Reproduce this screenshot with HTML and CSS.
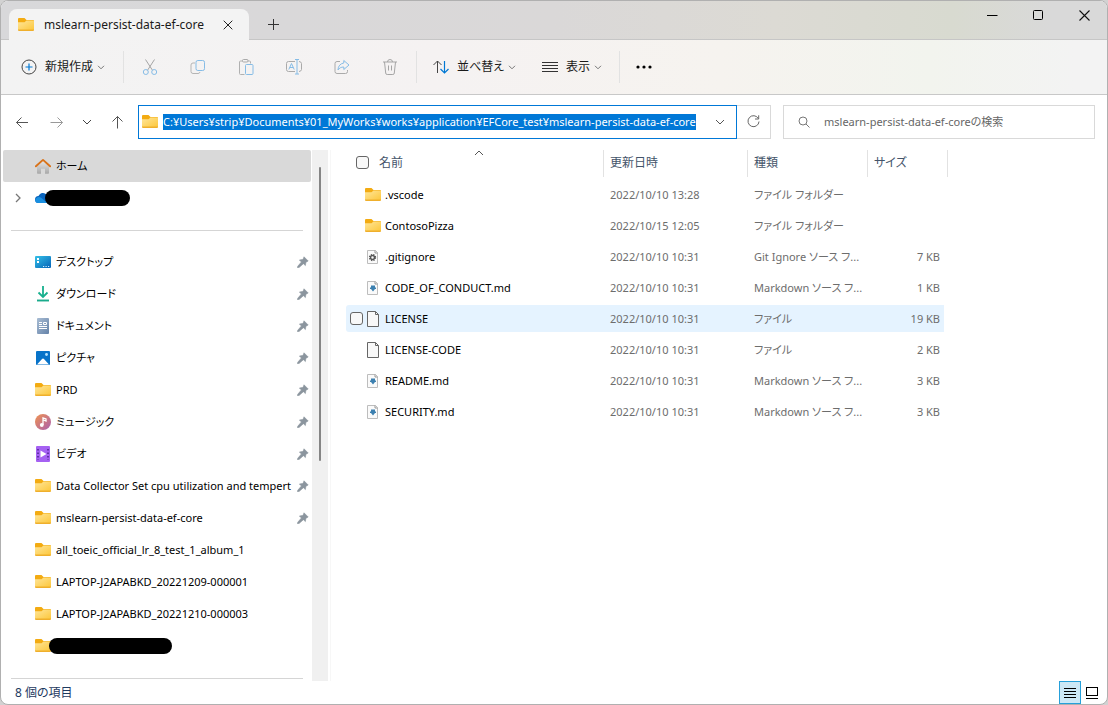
FILE: index.html
```html
<!DOCTYPE html>
<html lang="ja">
<head>
<meta charset="utf-8">
<title>mslearn-persist-data-ef-core</title>
<link rel="stylesheet" href="styles.css">
</head>
<body>
<svg class="defs" width="0" height="0" aria-hidden="true">
  <defs>
    <linearGradient id="gFolder" x1="0" y1="0" x2="1" y2="1"><stop offset="0" stop-color="#ffe69a"/><stop offset="1" stop-color="#fcc73c"/></linearGradient>
    <linearGradient id="gDesk" x1="0" y1="0" x2="1" y2="1"><stop offset="0" stop-color="#35c1e8"/><stop offset="1" stop-color="#0563b8"/></linearGradient>
    <linearGradient id="gDoc" x1="0" y1="0" x2="1" y2="1"><stop offset="0" stop-color="#a9bdd4"/><stop offset="1" stop-color="#6482a8"/></linearGradient>
    <linearGradient id="gMusic" x1="0" y1="0" x2="1" y2="1"><stop offset="0" stop-color="#f09350"/><stop offset="1" stop-color="#a95fb0"/></linearGradient>
    <linearGradient id="gHome" x1="0" y1="0" x2="0" y2="1"><stop offset="0" stop-color="#e8e8e8"/><stop offset="1" stop-color="#a8a8a8"/></linearGradient>
  </defs>
  <symbol id="folder" viewBox="0 0 16 16"><path d="M0 2a1 1 0 0 1 1-1h5.500l2 2H15a1 1 0 0 1 1 1v3H0z" fill="#f3ab12"/><path d="M0 5.200h6.500L8.500 3.500h6.900a.6.6 0 0 1 .6.6V13H0z" fill="url(#gFolder)"/><path d="M0 12.400h16v.600a1 1 0 0 1-1 1H1a1 1 0 0 1-1-1z" fill="#efaf2c"/></symbol>
  <symbol id="home" viewBox="0 0 16 16"><path d="M2 8l6-5.500L14 8v7a.8.8 0 0 1-.8.8H10v-5H6v5H2.800a.8.8 0 0 1-.8-.8z" fill="url(#gHome)"/><path d="M.9 8.300L8 1.900l7.100 6.400" fill="none" stroke="#d9731a" stroke-width="1.900" stroke-linecap="round" stroke-linejoin="round"/></symbol>
  <symbol id="cloud" viewBox="0 0 16 16"><path d="M3.500 13A3.500 3.500 0 0 1 3.500 6 5 5 0 0 1 12 5v8z" fill="#0a64bd"/><path d="M0 10.500C1 7 4 6 6.500 8l6 5h-9A3.500 3.500 0 0 1 0 10.500z" fill="#198fe0"/></symbol>
  <symbol id="desktop" viewBox="0 0 16 16"><rect y="2" width="16" height="12" rx="1" fill="url(#gDesk)"/><path d="M2 4h2v2H2zM2 7h2v2H2z" fill="#fff"/><path d="M8 12h1.200v1H8zM10.500 12h1.200v1h-1.200zM13 12h1.200v1H13z" fill="#d0ebff"/></symbol>
  <symbol id="download" viewBox="0 0 16 16"><path d="M8 0v10.500M3.500 6.500L8 11l4.500-4.500" fill="none" stroke="#17b08e" stroke-width="1.800"/><path d="M2 14.500h12" stroke="#1aab8c" stroke-width="1.900"/></symbol>
  <symbol id="document" viewBox="0 0 16 16"><rect x="2" width="12" height="16" rx="1" fill="url(#gDoc)"/><path d="M4 4.500h3M4 6.500h3M4 8.500h8M4 10.500h8" stroke="#fff"/><path d="M8.500 4.500h3v2h-3z" stroke="#fff" fill="none"/></symbol>
  <symbol id="picture" viewBox="0 0 16 16"><rect x="1" y="1" width="14" height="14" rx="1" fill="#0873c9"/><path d="M2 14.500l4.800-5.300a1.500 1.500 0 0 1 2.400 0L14 14.500z" fill="#fff"/><circle cx="11.500" cy="4.500" r="1.400" fill="#b5e3ff"/></symbol>
  <symbol id="music" viewBox="0 0 16 16"><circle cx="8" cy="8" r="8" fill="url(#gMusic)"/><circle cx="6.800" cy="11" r="1.900" fill="#fff"/><path d="M8 11V4l3 1v2L8.500 6" fill="none" stroke="#fff" stroke-width="1.300"/></symbol>
  <symbol id="video" viewBox="0 0 16 16"><rect x="1" y="0" width="14" height="16" rx="1" fill="#a561f2"/><path d="M5.500 4.500v7L11.500 8z" fill="#fff"/><path d="M3 3v11M13 3v11" stroke="#4a2090" stroke-width="1.500" stroke-dasharray="1.500 2"/></symbol>
  <symbol id="pin" viewBox="0 0 12 12"><path d="M7 .8L11.200 5l-1.400.7-1 1-.4 2.900-2-1.900L2 11.600.5 11.800l.2-1.500L4.400 6 2.400 4l3-.5 1-1z" fill="#8b959e" stroke="#8b959e" stroke-width=".6"/></symbol>
  <symbol id="chev" viewBox="0 0 10 10"><path d="M2 3.800L5 6.800l3-3" fill="none" stroke="currentColor"/></symbol>
  <symbol id="bigchev" viewBox="0 0 10 10"><path d="M1 3L5 7l4-4" fill="none" stroke="currentColor"/></symbol>
  <symbol id="gear" viewBox="0 0 16 16"><path d="M2.500 1.500h8L12.500 3.500v11h-10z" fill="#fafafa" stroke="#bdbdbd"/><path d="M10 1.500V4h2.500" fill="none" stroke="#999"/><circle cx="7.500" cy="8.500" r="2" fill="none" stroke="#555" stroke-width="1.500"/><circle cx="7.500" cy="8.500" r="3.100" fill="none" stroke="#555" stroke-width="1.100" stroke-dasharray="1.300 1.200"/></symbol>
  <symbol id="md" viewBox="0 0 16 16"><path d="M2.500 1.500h8L12.500 3.500v11h-10z" fill="#fafafa" stroke="#bdbdbd"/><path d="M10 1.500V4h2.500" fill="none" stroke="#999"/><path d="M6 5.500h4v2h1v1.500h-1L8 11.500 6 9H5V7.500h1z" fill="#3c80b0"/></symbol>
  <symbol id="file" viewBox="0 0 16 16"><path d="M2.500.5H10.500L13.500 3.500v12h-11z" fill="#f8f8f8" stroke="#666"/><path d="M10.500 .5v3h3" fill="none" stroke="#666"/></symbol>
</svg>

<div class="window">
  <header class="titlebar">
    <div class="tab">
      <svg class="ico"><use href="#folder"/></svg>
      <span class="tab-title">mslearn-persist-data-ef-core</span>
      <button class="plain" aria-label="タブを閉じる"><svg width="10" height="10" viewBox="0 0 10 10"><path d="M.7.700l8.600 8.600M9.300.700L.7 9.300" stroke="#222"/></svg></button>
    </div>
    <button class="plain new-tab" aria-label="新しいタブ"><svg width="11" height="11" viewBox="0 0 11 11"><path d="M5.500 0v11M0 5.500h11" stroke="#333"/></svg></button>
    <div class="caption">
      <button class="plain" aria-label="最小化"><svg width="11" height="11" viewBox="0 0 11 11"><path d="M0 5.500h10.500" stroke="#000"/></svg></button>
      <button class="plain" aria-label="最大化"><svg width="11" height="11" viewBox="0 0 11 11"><rect x=".5" y=".5" width="9" height="9" rx="1" fill="none" stroke="#000"/></svg></button>
      <button class="plain" aria-label="閉じる"><svg width="11" height="11" viewBox="0 0 11 11"><path d="M.5.500l10 10M10.500.500l-10 10" stroke="#111" stroke-width="1.100"/></svg></button>
    </div>
  </header>

  <div class="toolbar">
    <button class="cmd new"><svg class="ico" viewBox="0 0 16 16"><circle cx="8" cy="8" r="7" fill="none" stroke="#444"/><path d="M8 4.500v7M4.500 8h7" stroke="#0078d4" stroke-width="1.200"/></svg><span>新規作成</span><svg class="chev"><use href="#chev"/></svg></button>
    <div class="group icons">
      <button class="plain" aria-label="切り取り"><svg class="ico" viewBox="0 0 16 16" fill="none"><path d="M3.500.500l7 10.800M12.500.500l-7 10.800" stroke="#a5a5a5"/><circle cx="3.800" cy="13" r="2.500" stroke="#86bce6"/><circle cx="12.200" cy="13" r="2.500" stroke="#86bce6"/></svg></button>
      <button class="plain" aria-label="コピー"><svg class="ico" viewBox="0 0 16 16" fill="none"><path d="M5 4H3a2 2 0 0 0-2 2v6.500a2 2 0 0 0 2 2h5a2 2 0 0 0 2-1.500" stroke="#b5b5b5"/><rect x="6" y="1.500" width="8.500" height="10" rx="1.800" stroke="#86bce6"/></svg></button>
      <button class="plain" aria-label="貼り付け"><svg class="ico" viewBox="0 0 16 16" fill="none"><path d="M4.500 2H2.500a1 1 0 0 0-1 1v11.500a1 1 0 0 0 1 1h4M9.500 2h2a1 1 0 0 1 1 1v1.500" stroke="#b0b0b0"/><rect x="4.500" y=".5" width="5.500" height="2.500" rx="1" stroke="#aaa"/><rect x="7.500" y="5.500" width="7.500" height="10" rx="1" stroke="#86bce6"/></svg></button>
      <button class="plain" aria-label="名前の変更"><svg class="ico" viewBox="0 0 16 16" fill="none"><path d="M9 2.500H2.500a2 2 0 0 0-2 2v6a2 2 0 0 0 2 2H9M13 2.500a2.500 2.500 0 0 1 2.500 2v6a2.500 2.500 0 0 1-2.500 2" stroke="#aaa"/><path d="M2.800 10.500L5.500 4.500l2.700 6M3.800 8.500h3.500M11 .5v14.500M9 .5h4M9 15h4" stroke="#86bce6"/></svg></button>
      <button class="plain" aria-label="共有"><svg class="ico" viewBox="0 0 16 16" fill="none"><path d="M6 2.500H3a2 2 0 0 0-2 2v8a2 2 0 0 0 2 2h8.500a2 2 0 0 0 2-2V11" stroke="#aaa"/><path d="M9.800 1.500L15 6l-5.200 4.500V8C7 8 5.300 9 4 11c0-4 2.500-6.500 5.800-7z" stroke="#86bce6" stroke-linejoin="round"/></svg></button>
      <button class="plain" aria-label="削除"><svg class="ico" viewBox="0 0 16 16" fill="none" stroke="#a5a5a5"><path d="M1 3h14M5.500 3a2.500 2.500 0 0 1 5 0M2.500 3l1.200 11a1.500 1.500 0 0 0 1.500 1.500h5.600a1.500 1.500 0 0 0 1.500-1.500L13.500 3M6.500 6.500v5M9.500 6.500v5"/></svg></button>
    </div>
    <div class="group menus">
      <button class="cmd"><svg class="ico" viewBox="0 0 16 16" fill="none"><path d="M4.500 14V2M.5 6l4-4 4 4" stroke="#444"/><path d="M11.500 2v12M7.500 10l4 4 4-4" stroke="#0078d4" stroke-width="1.200"/></svg><span>並べ替え</span><svg class="chev"><use href="#chev"/></svg></button>
      <button class="cmd"><svg class="ico" viewBox="0 0 16 16"><path d="M0 3.500h16M0 6.500h16M0 9.500h16M0 12.500h16" stroke="#333"/></svg><span>表示</span><svg class="chev"><use href="#chev"/></svg></button>
    </div>
    <button class="plain more" aria-label="詳細"><svg class="ico" viewBox="0 0 16 16"><circle cx="2" cy="8" r="1.600"/><circle cx="8" cy="8" r="1.600"/><circle cx="14" cy="8" r="1.600"/></svg></button>
  </div>

  <div class="navbar">
    <div class="nav-buttons">
      <button class="plain" aria-label="戻る"><svg width="14" height="14" viewBox="0 0 14 14" fill="none" stroke="#555"><path d="M13 7.500H1.500M6.500 2.500l-5 5 5 5"/></svg></button>
      <button class="plain" aria-label="進む"><svg width="14" height="14" viewBox="0 0 14 14" fill="none" stroke="#999"><path d="M1.500 7.500h12M8.500 2.500l5 5-5 5"/></svg></button>
      <button class="plain small" aria-label="最近表示した場所"><svg class="chev"><use href="#bigchev"/></svg></button>
      <button class="plain" aria-label="上へ"><svg width="14" height="14" viewBox="0 0 14 14" fill="none" stroke="#555"><path d="M6.500 13.500V1.500M1.500 6.500l5-5 5 5"/></svg></button>
    </div>
    <div class="address">
      <div class="path">
        <svg class="ico"><use href="#folder"/></svg>
        <input class="path-input" type="text" aria-label="アドレス" value="C:¥Users¥strip¥Documents¥01_MyWorks¥works¥application¥EFCore_test¥mslearn-persist-data-ef-core">
        <button class="plain path-drop" aria-label="以前の場所"><svg class="chev"><use href="#bigchev"/></svg></button>
      </div>
      <button class="plain refresh" aria-label="最新の情報に更新"><svg width="14" height="14" viewBox="0 0 14 14" fill="none" stroke="#666"><path d="M11.300 3.500A5.500 5.500 0 1 0 12 6.500M11.700.300v3.700H8"/></svg></button>
    </div>
    <label class="search">
      <svg width="12" height="12" viewBox="0 0 12 12" fill="none" stroke="#777"><circle cx="5" cy="5" r="4"/><path d="M8 8l3.500 3.500"/></svg>
      <input type="search" aria-label="検索" placeholder="mslearn-persist-data-ef-coreの検索">
    </label>
  </div>

  <div class="content">
    <nav class="sidebar">
      <div class="tree">
        <a class="node current" href="#"><span class="twist"></span><svg class="ico"><use href="#home"/></svg><span class="label">ホーム</span></a>
        <a class="node" href="#" aria-label="OneDrive"><span class="twist"><svg width="10" height="10" viewBox="0 0 10 10"><path d="M3 1l4 4-4 4" fill="none" stroke="#777" stroke-width="1.300"/></svg></span><svg class="ico"><use href="#cloud"/></svg><span class="redacted account"></span></a>
        <hr>
        <a class="node" href="#"><span class="twist"></span><svg class="ico"><use href="#desktop"/></svg><span class="label">デスクトップ</span><svg class="pin"><use href="#pin"/></svg></a>
        <a class="node" href="#"><span class="twist"></span><svg class="ico"><use href="#download"/></svg><span class="label">ダウンロード</span><svg class="pin"><use href="#pin"/></svg></a>
        <a class="node" href="#"><span class="twist"></span><svg class="ico"><use href="#document"/></svg><span class="label">ドキュメント</span><svg class="pin"><use href="#pin"/></svg></a>
        <a class="node" href="#"><span class="twist"></span><svg class="ico"><use href="#picture"/></svg><span class="label">ピクチャ</span><svg class="pin"><use href="#pin"/></svg></a>
        <a class="node" href="#"><span class="twist"></span><svg class="ico"><use href="#folder"/></svg><span class="label">PRD</span><svg class="pin"><use href="#pin"/></svg></a>
        <a class="node" href="#"><span class="twist"></span><svg class="ico"><use href="#music"/></svg><span class="label">ミュージック</span><svg class="pin"><use href="#pin"/></svg></a>
        <a class="node" href="#"><span class="twist"></span><svg class="ico"><use href="#video"/></svg><span class="label">ビデオ</span><svg class="pin"><use href="#pin"/></svg></a>
        <a class="node" href="#"><span class="twist"></span><svg class="ico"><use href="#folder"/></svg><span class="label">Data Collector Set cpu utilization and tempert</span><svg class="pin"><use href="#pin"/></svg></a>
        <a class="node" href="#"><span class="twist"></span><svg class="ico"><use href="#folder"/></svg><span class="label">mslearn-persist-data-ef-core</span><svg class="pin"><use href="#pin"/></svg></a>
        <a class="node" href="#"><span class="twist"></span><svg class="ico"><use href="#folder"/></svg><span class="label">all_toeic_official_lr_8_test_1_album_1</span></a>
        <a class="node" href="#"><span class="twist"></span><svg class="ico"><use href="#folder"/></svg><span class="label">LAPTOP-J2APABKD_20221209-000001</span></a>
        <a class="node" href="#"><span class="twist"></span><svg class="ico"><use href="#folder"/></svg><span class="label">LAPTOP-J2APABKD_20221210-000003</span></a>
        <a class="node" href="#" aria-label="フォルダー"><span class="twist"></span><svg class="ico"><use href="#folder"/></svg><span class="redacted place"></span></a>
        <hr>
      </div>
      <div class="scrollbar"><div class="thumb"></div></div>
    </nav>

    <main class="files">
      <table>
        <colgroup><col class="c-name"><col class="c-date"><col class="c-type"><col class="c-size"></colgroup>
        <thead>
          <tr>
            <th><div class="head-name"><input type="checkbox" aria-label="すべて選択"><span>名前</span><svg class="sort" viewBox="0 0 10 6"><path d="M1 5l4-4 4 4" fill="none" stroke="#555"/></svg></div></th>
            <th>更新日時</th><th>種類</th><th>サイズ</th>
          </tr>
        </thead>
        <tbody>
          <tr><td><div class="name"><input type="checkbox" aria-label=".vscode"><svg class="ico"><use href="#folder"/></svg><span>.vscode</span></div></td><td>2022/10/10 13:28</td><td>ファイル フォルダー</td><td></td></tr>
          <tr><td><div class="name"><input type="checkbox" aria-label="ContosoPizza"><svg class="ico"><use href="#folder"/></svg><span>ContosoPizza</span></div></td><td>2022/10/15 12:05</td><td>ファイル フォルダー</td><td></td></tr>
          <tr><td><div class="name"><input type="checkbox" aria-label=".gitignore"><svg class="ico"><use href="#gear"/></svg><span>.gitignore</span></div></td><td>2022/10/10 10:31</td><td>Git Ignore ソース フ...</td><td>7 KB</td></tr>
          <tr><td><div class="name"><input type="checkbox" aria-label="CODE_OF_CONDUCT.md"><svg class="ico"><use href="#md"/></svg><span>CODE_OF_CONDUCT.md</span></div></td><td>2022/10/10 10:31</td><td>Markdown ソース フ...</td><td>1 KB</td></tr>
          <tr class="hot"><td><div class="name"><input type="checkbox" aria-label="LICENSE"><svg class="ico"><use href="#file"/></svg><span>LICENSE</span></div></td><td>2022/10/10 10:31</td><td>ファイル</td><td>19 KB</td></tr>
          <tr><td><div class="name"><input type="checkbox" aria-label="LICENSE-CODE"><svg class="ico"><use href="#file"/></svg><span>LICENSE-CODE</span></div></td><td>2022/10/10 10:31</td><td>ファイル</td><td>2 KB</td></tr>
          <tr><td><div class="name"><input type="checkbox" aria-label="README.md"><svg class="ico"><use href="#md"/></svg><span>README.md</span></div></td><td>2022/10/10 10:31</td><td>Markdown ソース フ...</td><td>3 KB</td></tr>
          <tr><td><div class="name"><input type="checkbox" aria-label="SECURITY.md"><svg class="ico"><use href="#md"/></svg><span>SECURITY.md</span></div></td><td>2022/10/10 10:31</td><td>Markdown ソース フ...</td><td>3 KB</td></tr>
        </tbody>
      </table>
    </main>
  </div>

  <footer class="status">
    <span>8 個の項目</span>
    <div class="views">
      <button class="plain active" aria-label="詳細表示"><svg width="12" height="12" viewBox="0 0 12 12"><path d="M0 1.500h12M0 4.500h12M0 7.500h12M0 10.500h12" stroke="#000"/></svg></button>
      <button class="plain" aria-label="大アイコン"><svg width="12" height="12" viewBox="0 0 12 12"><rect x=".5" y=".5" width="11" height="8" fill="none" stroke="#000"/><path d="M0 11.500h12" stroke="#000"/></svg></button>
    </div>
  </footer>
</div>
</body>
</html>
```

FILE: styles.css
```css
* { box-sizing: border-box; }

body {
  margin: 0;
  background: #d2d2d2;
  color: #1a1a1a;
  font: 12px/16px "Noto Sans", "Noto Sans CJK JP", sans-serif;
  font-feature-settings: "palt";
}

button, input {
  font: inherit;
  font-feature-settings: inherit;
  color: inherit;
}

svg { display: block; flex: none; }
.defs { position: absolute; }
.ico { width: 16px; height: 16px; }
.chev { width: 10px; height: 10px; color: #777; }

.plain, .cmd {
  display: flex;
  align-items: center;
  justify-content: center;
  margin: 0;
  padding: 0;
  border: 0;
  background: none;
}

.window {
  display: flex;
  flex-direction: column;
  min-height: 100vh;
  border: 1px solid #b0b0b0;
  border-radius: 8px;
  background: #fff;
  overflow: hidden;
}

/* Title bar */
.titlebar {
  display: flex;
  height: 39px;
  padding-left: 8px;
  border-bottom: 1px solid #c6c6c6;
  background: linear-gradient(90deg, #d8d8da 0%, #dad8d8 50%, #dcdad4 70%, #d8dad0 86%, #d9d9d9 95%);
}
.tab {
  display: flex;
  align-items: center;
  width: 240px;
  height: 31px;
  margin-top: 8px;
  padding: 0 16px 0 9px;
  border-radius: 8px 8px 0 0;
  background: #f3f3f3;
}
.tab-title { flex: 1; margin-left: 10px; }
.new-tab { width: 48px; padding-top: 8px; }
.caption { display: flex; height: 28px; margin-left: auto; }
.caption .plain { width: 46px; }

/* Command bar */
.toolbar {
  display: flex;
  align-items: center;
  height: 55px;
  border-bottom: 1px solid #c8c8c8;
  background: linear-gradient(90deg, #f3f3f3 0%, #f5f2f2 40%, #f6f3ef 65%, #f2f4ee 84%, #f3f3f3 97%);
}
.cmd span { margin: 0 3px 0 8px; }
.new { width: 123px; height: 32px; padding-left: 20px; justify-content: flex-start; border-right: 1px solid #e2e2e2; }
.group { display: flex; align-items: center; height: 32px; border-right: 1px solid #e2e2e2; }
.icons { width: 293px; padding-left: 2px; }
.icons .plain { width: 48px; height: 32px; }
.menus { width: 203px; gap: 25px; padding-left: 16px; }
.more { width: 48px; height: 32px; }

/* Address bar */
.navbar { display: flex; align-items: center; height: 53px; margin-bottom: 2px; padding-right: 12px; font-size: 11px; }
.nav-buttons { display: flex; width: 137px; padding-left: 4px; }
.nav-buttons .plain { width: 34px; height: 34px; }
.nav-buttons .small { width: 28px; }
.nav-buttons .chev { color: #444; }
.address { display: flex; flex: 2 1 0; min-width: 0; height: 34px; }
.path {
  display: flex;
  flex: 1;
  align-items: center;
  min-width: 0;
  padding-left: 3px;
  border: 1px solid #0078d7;
}
.path-input {
  field-sizing: content;
  min-width: 0;
  height: 16px;
  margin-left: 5px;
  padding: 0;
  border: 0;
  background: #0078d7;
  color: #fff;
}
.path-drop { width: 32px; height: 32px; margin-left: auto; }
.path-drop .chev { color: #555; }
.refresh { width: 34px; border: 1px solid #d9d9d9; border-left: 0; }
.search {
  display: flex;
  flex: 1 1 0;
  align-items: center;
  gap: 14px;
  height: 34px;
  max-width: 312px;
  margin-left: 12px;
  padding-left: 14px;
  border: 1px solid #d9d9d9;
}
.search input { flex: 1; min-width: 0; padding: 0; border: 0; outline: 0; background: none; appearance: none; }
.search input::placeholder { color: #666; }

/* Navigation pane */
.content { display: flex; flex: 1; font-size: 11px; }
.sidebar { display: flex; flex: none; width: 330px; border-right: 1px solid #f7f7f7; }
.tree { width: 310px; margin-right: 1px; padding-left: 2px; color: #000; }
.node {
  display: flex;
  align-items: center;
  height: 32px;
  padding-right: 2px;
  color: inherit;
  text-decoration: none;
}
.current { border-radius: 2px; background: #d9d9d9; }
.twist { flex: none; width: 32px; padding-left: 10px; }
.label { flex: 1; min-width: 0; margin-left: 5px; overflow: hidden; white-space: nowrap; }
.pin { width: 12px; height: 12px; }
.tree hr { height: 1px; margin: 16px 8px 15px; border: 0; background: #d5d5d5; }
.tree hr:last-child { margin-bottom: 2px; }
.redacted { height: 16px; border-radius: 8px; background: #000; }
.account { width: 85px; margin-left: -6px; }
.place { width: 123px; margin-left: -2px; }
.scrollbar { width: 16px; padding: 17px 7px 0; background: #f0f0f0; }
.thumb { width: 2px; height: 294px; border-radius: 1px; background: #858585; }

/* File list */
.files { flex: 1; min-width: 0; padding-left: 15px; }
table { width: 602px; table-layout: fixed; border-collapse: separate; border-spacing: 0 4px; margin-top: -4px; }
.c-name { width: 258px; }
.c-date { width: 144px; }
.c-type { width: 120px; }
.c-size { width: 80px; }
th, td { height: 27px; padding: 0 0 0 6px; white-space: nowrap; text-align: left; }
th { padding-bottom: 2px; border-right: 1px solid #e2e2e2; color: #44546a; font-size: 12px; font-weight: 400; }
td { color: #6d6d6d; }
td:first-child, th:first-child { padding-left: 4px; }
td:last-child {
  padding: 0 4px 0 0;
  border-right: 4px solid transparent;
  background-clip: padding-box;
  text-align: right;
}
.name { display: flex; align-items: center; color: #000; }
.name .ico { margin: 0 4px 0 2px; }
.name input { opacity: 0; }
.hot .name input, tr:hover .name input { opacity: 1; }
.hot td { background-color: #e5f3ff; }
.hot td:first-child { border-radius: 3px 0 0 3px; }
.head-name { position: relative; display: flex; align-items: center; gap: 10px; padding-left: 6px; }
.sort { position: absolute; top: -5px; left: 124px; width: 10px; height: 6px; }
input[type="checkbox"] {
  flex: none;
  width: 13px;
  height: 13px;
  margin: 0;
  appearance: none;
  border: 1px solid #666;
  border-radius: 3px;
  background: #f8f8f8;
}

/* Status bar */
.status { display: flex; align-items: center; height: 23px; padding: 0 4px 0 14px; color: #1e3a5f; }
.views { display: flex; margin-left: auto; }
.views .plain { width: 22px; height: 23px; }
.views .active { border: 1px solid #26a0da; background: #cce8f6; }
```
